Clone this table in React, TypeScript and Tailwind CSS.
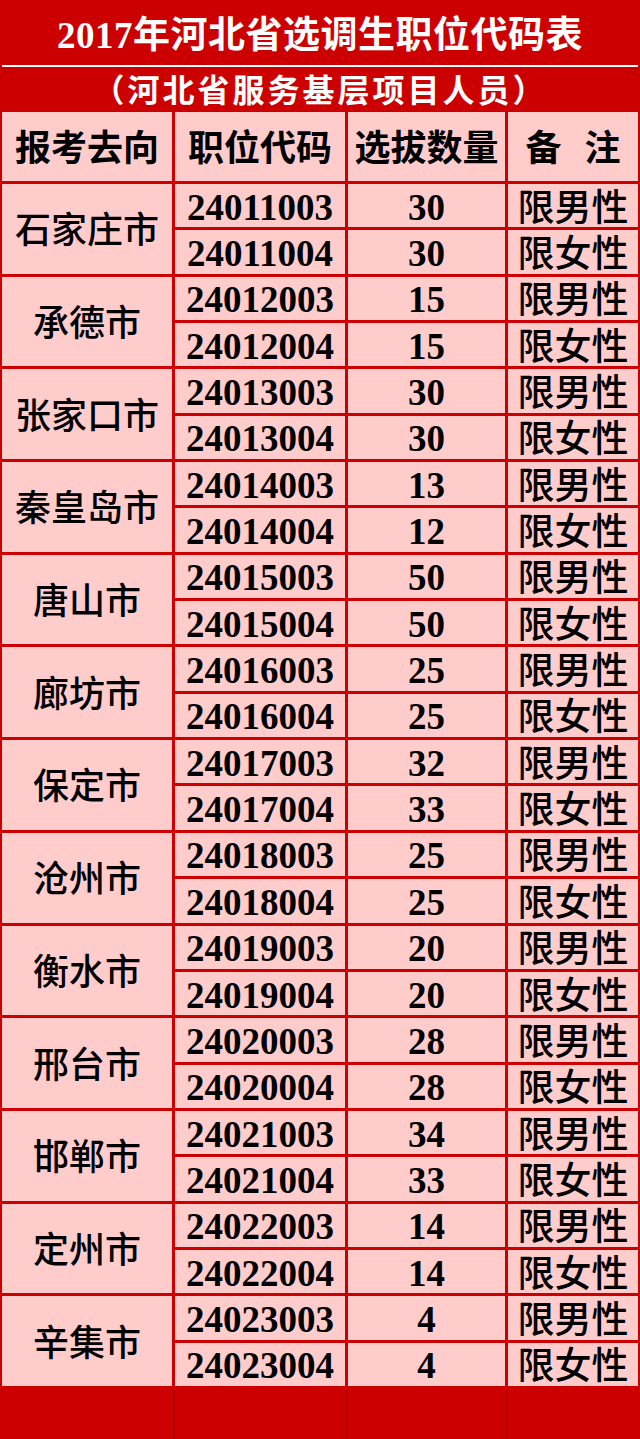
const rows: [string, string, string, string, string][] = [
  ['石家庄市', '24011003', '24011004', '30', '30'],
  ['承德市', '24012003', '24012004', '15', '15'],
  ['张家口市', '24013003', '24013004', '30', '30'],
  ['秦皇岛市', '24014003', '24014004', '13', '12'],
  ['唐山市', '24015003', '24015004', '50', '50'],
  ['廊坊市', '24016003', '24016004', '25', '25'],
  ['保定市', '24017003', '24017004', '32', '33'],
  ['沧州市', '24018003', '24018004', '25', '25'],
  ['衡水市', '24019003', '24019004', '20', '20'],
  ['邢台市', '24020003', '24020004', '28', '28'],
  ['邯郸市', '24021003', '24021004', '34', '33'],
  ['定州市', '24022003', '24022004', '14', '14'],
  ['辛集市', '24023003', '24023004', '4', '4'],
];

const cell = 'bg-[#ffcccc] flex items-center justify-center text-black leading-none';
const cjk = `${cell} pt-[5px] text-[36px]`;
const num = `${cell} pt-[3px] text-[37px] font-bold`;

export default function App() {
  return (
    <div className="w-[640px] h-[1439px] bg-[#cc0000] flex flex-col font-['Liberation_Serif','Noto_Sans_CJK_SC',serif]">
      <div className="h-[65px] flex items-center justify-center pt-[6px] text-white font-bold text-[37px] leading-none tracking-[0.5px]">
        2017年河北省选调生职位代码表
      </div>
      <div className="h-[2px] mx-[2px] bg-white" />
      <div className="h-[45px] flex items-center justify-center pt-[2px] text-white font-bold text-[32px] leading-none tracking-[3px]">
        （河北省服务基层项目人员）
      </div>

      <div className="grid grid-cols-[170px_170px_157px_130px] grid-rows-[69px] auto-rows-[43.35px] gap-[3px] px-[2px] pb-[3px] bg-[#cc0000]">
        <div className={`${cjk} font-bold`}>报考去向</div>
        <div className={`${cjk} font-bold`}>职位代码</div>
        <div className={`${cjk} font-bold`}>选拔数量</div>
        <div className={`${cjk} font-bold [word-spacing:14px]`}>备 注</div>

        {rows.map(([city, c1, c2, n1, n2]) => (
          <div key={city} className="contents">
            <div className={`${cjk} row-span-2 font-medium`}>{city}</div>
            <div className={num}>{c1}</div>
            <div className={num}>{n1}</div>
            <div className={`${cjk} text-[37px] font-medium`}>限男性</div>
            <div className={num}>{c2}</div>
            <div className={num}>{n2}</div>
            <div className={`${cjk} text-[37px] font-medium`}>限女性</div>
          </div>
        ))}
      </div>

      <div className="flex-1 flex px-[2px]">
        <div className="w-[171px]" />
        <div className="w-[173px] border-l-2 border-[#b50000]" />
        <div className="w-[160px] border-l-2 border-[#b50000]" />
        <div className="flex-1 border-l-2 border-[#b50000]" />
      </div>
    </div>
  );
}
